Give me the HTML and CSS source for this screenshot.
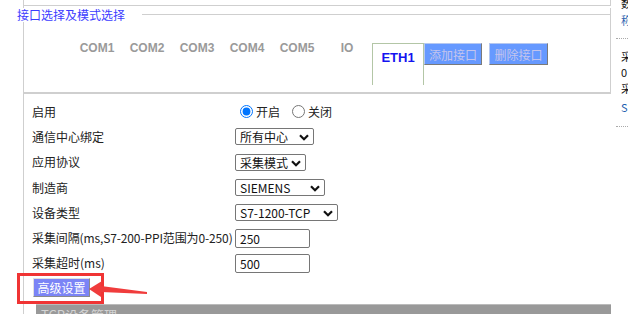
FILE: index.html
```html
<!DOCTYPE html>
<html lang="zh-CN">

<head>
    <meta charset="UTF-8">
    <title>接口选择及模式选择</title>
    <link rel="stylesheet" href="styles.css">
</head>

<body>
    <div class="page">
        <div class="main">
            <div class="topbox"></div>

            <!-- interface selection -->
            <div class="fs">
                <div class="fs-head">
                    <span class="legend">接口选择及模式选择</span>
                    <span class="fs-line"></span>
                </div>
                <div class="tabs">
                    <span class="tab">COM1</span>
                    <span class="tab">COM2</span>
                    <span class="tab">COM3</span>
                    <span class="tab">COM4</span>
                    <span class="tab">COM5</span>
                    <span class="tab">IO</span>
                    <span class="tab tab-on">ETH1</span>
                    <button class="btn-if">添加接口</button>
                    <button class="btn-if btn-del">删除接口</button>
                </div>
            </div>

            <!-- settings form -->
            <div class="form">
                <div class="rows">
                    <span class="lbl">启用</span>
                    <span class="ctl">
                        <label class="rd"><input type="radio" name="en" checked>开启</label>
                        <label class="rd"><input type="radio" name="en">关闭</label>
                    </span>

                    <span class="lbl">通信中心绑定</span>
                    <span class="ctl"><span class="sel w79">所有中心<svg class="chev" viewBox="0 0 10 7"><path d="M1 1.2 L5 5.2 L9 1.2"/></svg></span></span>

                    <span class="lbl">应用协议</span>
                    <span class="ctl"><span class="sel w71">采集模式<svg class="chev" viewBox="0 0 10 7"><path d="M1 1.2 L5 5.2 L9 1.2"/></svg></span></span>

                    <span class="lbl">制造商</span>
                    <span class="ctl"><span class="sel w90">SIEMENS<svg class="chev" viewBox="0 0 10 7"><path d="M1 1.2 L5 5.2 L9 1.2"/></svg></span></span>

                    <span class="lbl">设备类型</span>
                    <span class="ctl"><span class="sel w103">S7-1200-TCP<svg class="chev" viewBox="0 0 10 7"><path d="M1 1.2 L5 5.2 L9 1.2"/></svg></span></span>

                    <span class="lbl tight">采集间隔(ms,S7-200-PPI范围为0-250)</span>
                    <span class="ctl"><input class="txt" type="text" value="250"></span>

                    <span class="lbl">采集超时(ms)</span>
                    <span class="ctl"><input class="txt" type="text" value="500"></span>
                </div>

                <div class="adv-row">
                    <button class="btn-adv">高级设置</button>
                    <span class="mark"></span>
                    <svg class="arrow" width="60" height="20" viewBox="0 0 60 20">
                        <polygon points="0,10 13,2 12,7 58,13 58,15 12,13 12,18"/>
                    </svg>
                </div>

                <div class="bar">TCP设备管理</div>
            </div>
        </div>

        <div class="side">
            <span class="s-t cut">数</span>
            <span class="s-t blue">称</span>
            <span class="dots"></span>
            <span class="s-t">采</span>
            <span class="s-t">0</span>
            <span class="s-t">采</span>
            <span class="s-t blue s-gap">S</span>
            <span class="dots dots-2"></span>
        </div>
    </div>
</body>

</html>
```

FILE: styles.css
```css
body {
    margin: 0;
    background-color: #fff;
    font-family: "Noto Sans CJK SC", "Liberation Sans", sans-serif;
    font-size: 12px;
    color: #222;
    overflow: hidden;
}

.page {
    display: flex;
    height: 314px;
}

.main {
    margin-left: 23px;
    width: 587px;
    border-left: 1px solid #cfcfcf;
}

.topbox {
    height: 5px;
    border-bottom: 1px solid #cfcfcf;
    border-right: 1px solid #cfcfcf;
}

/* fieldset look */
.fs {
    border-right: 1px solid #cfcfcf;
    border-bottom: 1px solid #cfcfcf;
    padding-bottom: 7px;
}

.fs-head {
    display: flex;
    align-items: center;
    height: 14px;
    margin-top: 2px;
}

.legend {
    position: relative;
    margin-left: -7px;
    padding-right: 17px;
    background-color: #fff;
    color: #3c3cff;
    line-height: 14px;
}

.fs-line {
    flex: 1;
    border-top: 1px solid #cfcfcf;
    margin-top: -1px;
}

.tabs {
    display: flex;
    align-items: flex-start;
    margin-top: 21px;
    padding-left: 48px;
}

.tab {
    width: 50px;
    text-align: center;
    font-family: "Liberation Sans", sans-serif;
    font-weight: bold;
    font-size: 12px;
    line-height: 14px;
    color: #9a9a9a;
    margin-top: -2px;
}

.tab-on {
    height: 34px;
    margin-top: 0;
    padding-top: 7px;
    border: 1px solid #b3c6a6;
    border-bottom: none;
    color: #1414f0;
    font-size: 13px;
}

.btn-if {
    height: 22px;
    width: 58px;
    padding: 0;
    margin: 0;
    font-family: "Noto Sans CJK SC", sans-serif;
    font-size: 12px;
    color: #c4c4ec;
    background-color: #6699ff;
    border: 1px solid;
    border-color: #b6c8f0 #7a7a7a #7a7a7a #b6c8f0;
}

.btn-del {
    margin-left: 7px;
    width: 59px;
}

/* settings form */
.form {
    position: relative;
    border-top: 1px solid #cfcfcf;
    padding-top: 5px;
    padding-left: 8px;
}

.rows {
    display: grid;
    grid-template-columns: 203px 1fr;
    grid-auto-rows: 25.3px;
    align-items: center;
}

.lbl {
    white-space: nowrap;
    line-height: 16px;
}

.tight {
    letter-spacing: -0.12px;
}

.ctl {
    display: flex;
    align-items: center;
}

.rd {
    display: inline-flex;
    align-items: center;
    margin-right: 7px;
}

.rd input {
    margin: 0 3px 0 5px;
    width: 13px;
    height: 13px;
}

.sel {
    position: relative;
    box-sizing: border-box;
    height: 17px;
    padding-left: 4px;
    border: 1px solid #767676;
    border-radius: 2px;
    line-height: 15px;
    color: #111;
}

.chev {
    position: absolute;
    right: 4px;
    top: 5px;
    width: 10px;
    height: 7px;
    fill: none;
    stroke: #111;
    stroke-width: 2.2;
}

.w79 { width: 79px; }
.w71 { width: 71px; }
.w90 { width: 90px; }
.w103 { width: 103px; }

.txt {
    box-sizing: border-box;
    width: 75px;
    height: 19px;
    margin: 0;
    padding: 0 4px;
    border: 1px solid #767676;
    border-radius: 2px;
    font-family: "Noto Sans CJK SC", sans-serif;
    font-size: 12px;
    color: #111;
}

.adv-row {
    position: relative;
    height: 28px;
}

.btn-adv {
    margin: 2px 0 0 1px;
    width: 57px;
    height: 19px;
    padding: 0;
    font-family: "Noto Sans CJK SC", sans-serif;
    font-size: 12px;
    color: #fff;
    background-color: #7b84f6;
    border: 1px solid;
    border-color: #e0e0e0 #8a8a8a #8a8a8a #e0e0e0;
}

/* annotation */
.mark {
    position: absolute;
    left: -15px;
    top: -3px;
    width: 81px;
    height: 25px;
    border: 3px solid #f03434;
}

.arrow {
    position: absolute;
    left: 57px;
    top: 3px;
    fill: #f03c3c;
}

.bar {
    margin-left: 4px;
    height: 12px;
    background-color: #999;
    border-top: 1px solid #bbb;
    color: #d4d4d4;
    font-size: 13px;
    line-height: 19px;
    padding-left: 5px;
    overflow: hidden;
}

/* clipped neighbour column */
.side {
    flex: 1;
    display: flex;
    flex-direction: column;
    padding-left: 10px;
    overflow: hidden;
    font-size: 11px;
    color: #111;
}

.s-t {
    line-height: 16px;
}

.cut {
    margin-top: -5px;
}

.cut+.s-t {
    margin-top: 1px;
}

.blue {
    color: #1f5fb0;
}

.s-gap {
    margin-top: 3px;
}

.dots {
    margin: 10px 0 9px -5px;
    border-top: 1px dotted #aaa;
}

.dots-2 {
    margin-top: 11px;
}
```
